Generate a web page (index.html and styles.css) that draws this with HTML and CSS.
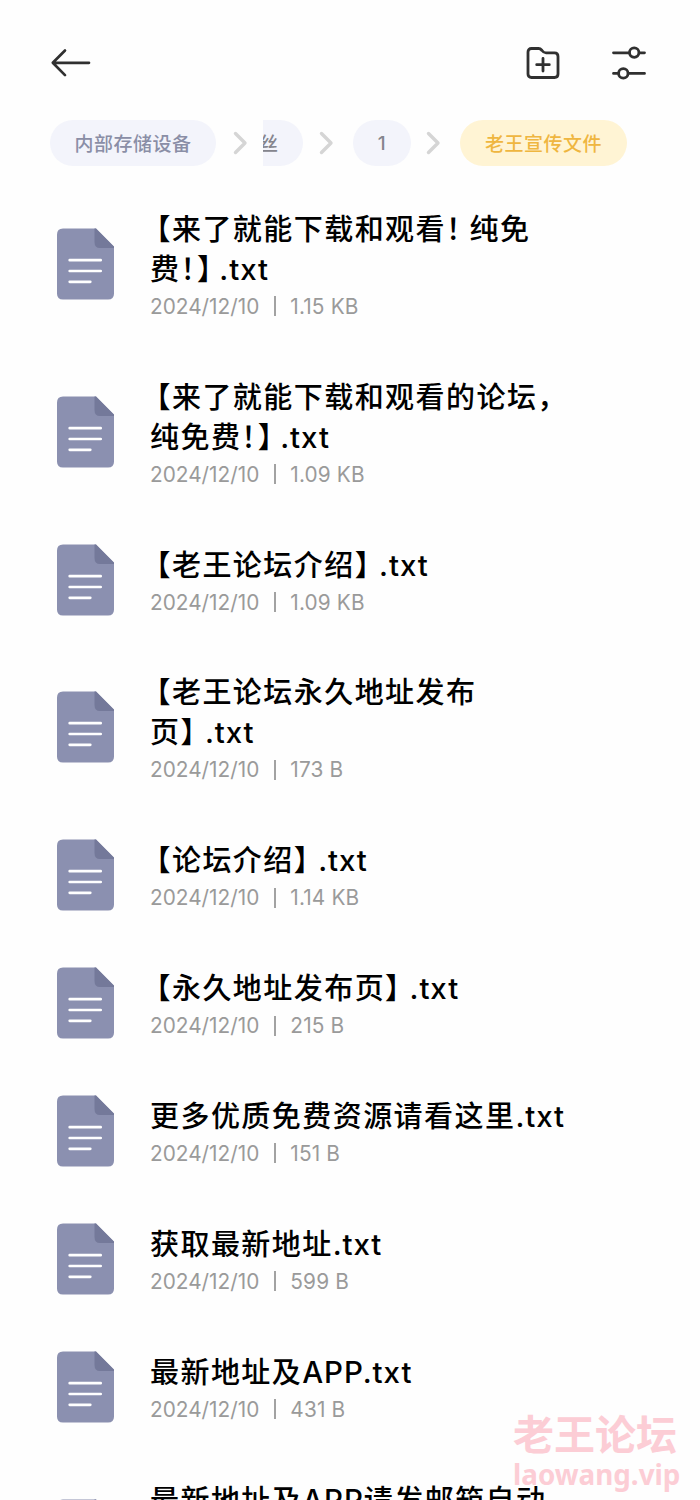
FILE: index.html
```html
<!DOCTYPE html>
<html lang="zh-CN">
<head>
<meta charset="utf-8">
<title>老王宣传文件</title>
<link rel="stylesheet" href="styles.css">
</head>
<body>
<svg class="defs" width="0" height="0">
  <symbol id="doc" viewBox="0 0 58 72">
    <path class="sheet" d="M6 .5H39L57 19V65.500Q57 71.500 51 71.500H6Q0 71.500 0 65.500V6.500Q0 .5 6 .5Z"/>
    <path class="fold" d="M38 .5H39L57 18.500V20H43Q37.500 20 37.500 14V.5Z"/>
    <path class="rules" d="M12.700 32.200H43.700M12.700 43H43.700M12.700 53.800H33.300"/>
  </symbol>
</svg>
<main class="screen">
  <header class="toolbar">
    <svg class="back" width="42" height="32" viewBox="0 0 42 32"><path d="M39 15.800H3M15 3.500 2.800 15.800 15 28.100"/></svg>
    <div class="actions">
      <svg width="34" height="34" viewBox="0 0 34 34"><path d="M5.500 2.500H12.500C14.500 2.500 15 3.300 16 4.500C17.200 6.100 18 6.900 20 6.900H28.500Q32 6.900 32 10.400V28Q32 31.500 28.500 31.500H5.500Q2 31.500 2 28V6Q2 2.500 5.500 2.500ZM17 12.500V25M10.700 18.700H23.300"/></svg>
      <svg width="34" height="34" viewBox="0 0 34 34"><path d="M1.500 6.800H17M27.500 6.800H32.500M1.500 27.400H6.500M17 27.400H32.500"/><circle cx="22.200" cy="6.600" r="4.700"/><circle cx="11.300" cy="27.400" r="4.700"/></svg>
    </div>
  </header>
  <nav class="crumbs">
    <span class="chip first">内部存储设备</span>
    <svg class="chev c1" width="15" height="24" viewBox="0 0 15 24"><path d="M2.500 2.500 12 12 2.500 21.500"/></svg>
    <span class="chip cut"><span>丝</span></span>
    <svg class="chev c2" width="15" height="24" viewBox="0 0 15 24"><path d="M2.500 2.500 12 12 2.500 21.500"/></svg>
    <span class="chip one">1</span>
    <svg class="chev c3" width="15" height="24" viewBox="0 0 15 24"><path d="M2.500 2.500 12 12 2.500 21.500"/></svg>
    <span class="chip current">老王宣传文件</span>
  </nav>
  <ul class="files">
    <li class="row"><svg class="icon"><use href="#doc"/></svg><div><h2><i class="open">【</i>来了就能下载和观看<i class="bang wide">！</i>纯免<br>费<i class="bang">！</i><i class="close">】</i><b>.txt</b></h2><p><span>2024/12/10</span><em></em><span>1.15 KB</span></p></div></li>
    <li class="row"><svg class="icon"><use href="#doc"/></svg><div><h2><i class="open">【</i>来了就能下载和观看的论坛，<br>纯免费<i class="bang">！</i><i class="close">】</i><b>.txt</b></h2><p><span>2024/12/10</span><em></em><span>1.09 KB</span></p></div></li>
    <li class="row"><svg class="icon"><use href="#doc"/></svg><div><h2><i class="open">【</i>老王论坛介绍<i class="close">】</i><b>.txt</b></h2><p><span>2024/12/10</span><em></em><span>1.09 KB</span></p></div></li>
    <li class="row"><svg class="icon"><use href="#doc"/></svg><div><h2><i class="open">【</i>老王论坛永久地址发布<br>页<i class="close">】</i><b>.txt</b></h2><p><span>2024/12/10</span><em></em><span>173 B</span></p></div></li>
    <li class="row"><svg class="icon"><use href="#doc"/></svg><div><h2><i class="open">【</i>论坛介绍<i class="close">】</i><b>.txt</b></h2><p><span>2024/12/10</span><em></em><span>1.14 KB</span></p></div></li>
    <li class="row"><svg class="icon"><use href="#doc"/></svg><div><h2><i class="open">【</i>永久地址发布页<i class="close">】</i><b>.txt</b></h2><p><span>2024/12/10</span><em></em><span>215 B</span></p></div></li>
    <li class="row"><svg class="icon"><use href="#doc"/></svg><div><h2>更多优质免费资源请看这里<b>.txt</b></h2><p><span>2024/12/10</span><em></em><span>151 B</span></p></div></li>
    <li class="row"><svg class="icon"><use href="#doc"/></svg><div><h2>获取最新地址<b>.txt</b></h2><p><span>2024/12/10</span><em></em><span>599 B</span></p></div></li>
    <li class="row"><svg class="icon"><use href="#doc"/></svg><div><h2>最新地址及<b class="caps">APP</b><b>.txt</b></h2><p><span>2024/12/10</span><em></em><span>431 B</span></p></div></li>
    <li class="row last"><svg class="icon"><use href="#doc"/></svg><div><h2>最新地址及<b class="caps">APP</b>请发邮箱自动</h2></div></li>
  </ul>
  <aside class="mark"><strong>老王论坛</strong><span>laowang.vip</span></aside>
</main>
</body>
</html>
```
FILE: styles.css
```css
* { box-sizing: border-box; }
body { margin: 0; background: #fefefe; font-family: "Inter", "Noto Sans CJK SC", sans-serif; }
.defs { display: block; }
.screen { position: relative; width: 700px; height: 1500px; overflow: hidden; }
.toolbar { display: flex; justify-content: space-between; align-items: center; height: 120px; padding: 6px 54px 0 50px; }
.toolbar svg { display: block; fill: none; stroke: #303030; stroke-width: 2.8; stroke-linecap: round; stroke-linejoin: round; }
.toolbar .back { stroke-width: 2.7; }
.actions { display: flex; gap: 52px; }
.crumbs { display: flex; align-items: center; height: 46px; padding-left: 50px; }
.chip { display: flex; align-items: center; justify-content: center; flex: none; height: 46px; padding-top: 3px; border-radius: 23px; background: #f3f4fb; color: #8a8ea6; font: 500 19px/43px "Inter", "Noto Sans CJK SC", sans-serif; letter-spacing: .5px; }
.first { width: 166px; }
.cut { width: 40px; border-radius: 0 23px 23px 0; overflow: hidden; justify-content: flex-start; color: #85858d; }
.cut span { margin-left: -4px; }
.one { width: 58px; padding-top: 1px; color: #85858d; }
.current { width: 167px; background: #fff4d4; color: #efb640; }
.chev { flex: none; fill: none; stroke: #d5d5d5; stroke-width: 3.4; stroke-linecap: round; stroke-linejoin: round; }
.c1 { margin: 0 15px 0 17px; }
.c2 { margin: 0 19px 0 16px; }
.c3 { margin: 0 19px 0 15px; }
.files { list-style: none; margin: 0; padding: 14px 0 0 57px; }
.row { display: flex; align-items: center; gap: 35px; padding: 28.930px 0; }
.row div { display: flex; flex-direction: column; }
.icon { flex: none; display: block; width: 58px; height: 72px; margin: -1px 0; }
.sheet { fill: #8b90b0; }
.fold { fill: #74799a; }
.rules { fill: none; stroke: #fff; stroke-width: 2.700; stroke-linecap: round; }
.last .sheet, .last .fold { fill: #999; }
h2 { margin: -2px 0 2px; color: #000; font: 500 29px/40px "Noto Sans CJK SC", sans-serif; letter-spacing: 1.45px; white-space: nowrap; }
h2 i { font-style: normal; }
h2 b { font: 500 29.500px/1 "Inter", sans-serif; letter-spacing: .9px; }
h2 .caps { font-size: 29.500px; letter-spacing: .9px; }
.open { margin-left: -8.500px; }
.close { margin-right: -6px; }
.bang { margin-right: -14px; }
.bang + .close { margin-right: -8px; }
.bang.wide { margin-right: -7px; }
p { display: flex; align-items: center; height: 25px; margin: 5px 0 0; color: #9a9a9a; font: 400 20.800px/25px "Inter", sans-serif; white-space: nowrap; }
p em { width: 2px; height: 20px; margin: 0 14px 0 15px; background: #a2a2a2; }
p span:last-child { letter-spacing: .15px; }
.last h2 { height: 80px; }
.last div { height: 110px; }
.mark { position: absolute; left: 513px; top: 1405px; display: flex; flex-direction: column; color: #fccdd5; white-space: nowrap; }
.mark strong { font: 700 41px/55px "Noto Sans CJK SC", sans-serif; }
.mark span { font: 700 27.800px/28px "Noto Sans", sans-serif; }
```
